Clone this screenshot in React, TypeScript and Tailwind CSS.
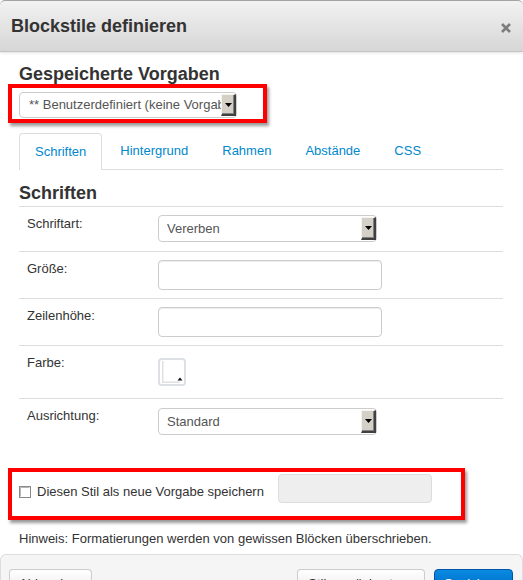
import React from "react";

const tabs = ["Schriften", "Hintergrund", "Rahmen", "Abstände", "CSS"];

function DropArrowButton() {
  return (
    <span className="my-px flex w-[15px] shrink-0 items-center justify-center border-t border-l border-r-2 border-b-2 border-t-[#f4f3ee] border-l-[#f4f3ee] border-r-[#404040] border-b-[#404040] bg-[#d4d0c8] shadow-[inset_-1px_-1px_0_#808080]">
      <svg width="7" height="4" viewBox="0 0 7 4" aria-hidden="true">
        <path d="M0 0h7L3.5 4z" fill="#000" />
      </svg>
    </span>
  );
}

function ClassicSelect({ value, className }: { value: string; className: string }) {
  return (
    <div className={`flex rounded-[4px] border border-[#ccc] bg-white text-[#555] ${className}`}>
      <span className="flex min-w-0 flex-1 items-center overflow-hidden whitespace-nowrap">{value}</span>
      <DropArrowButton />
    </div>
  );
}

function TextInput() {
  return (
    <input
      type="text"
      className="block h-[30px] w-[224px] rounded-[4px] border border-[#ccc] bg-white px-[6px] shadow-[inset_0_1px_1px_rgba(0,0,0,0.075)] outline-none"
    />
  );
}

function ColorSwatch() {
  return (
    <svg width="28" height="28" viewBox="0 0 28 28" aria-hidden="true">
      <rect x="1" y="1" width="26" height="26" rx="2.5" fill="#fff" stroke="#dde1e6" strokeWidth="2" />
      <rect x="4" y="3" width="1.5" height="22" fill="#e1e1e1" />
      <rect x="4" y="23.5" width="18" height="1.5" fill="#e1e1e1" />
      <path d="M19.5 22.5h5l-2.5-3z" fill="#111" />
    </svg>
  );
}

function CheckBox() {
  return (
    <svg width="12" height="12" viewBox="0 0 12 12" aria-hidden="true" className="shrink-0">
      <rect x="0.5" y="0.5" width="11" height="11" fill="#fff" stroke="#8a8a8a" />
      <path d="M1.5 10.5V1.5h9" fill="none" stroke="#b5b5b5" />
    </svg>
  );
}

function FormRow({
  label,
  height,
  controlTop,
  children,
}: {
  label: string;
  height: string;
  controlTop: string;
  children: React.ReactNode;
}) {
  return (
    <div className={`flex border-t border-[#ddd] ${height}`}>
      <div className="w-[139px] shrink-0 pl-[8px] pt-[7px] leading-[20px]">{label}</div>
      <div className={controlTop}>{children}</div>
    </div>
  );
}

export default function App() {
  return (
    <div className="relative h-[580px] w-[523px] overflow-hidden bg-white font-['Liberation_Sans',Arial,sans-serif] text-[13px] text-[#333]">
      {/* dialog title bar */}
      <header className="relative z-10 flex h-[52px] items-center justify-between rounded-t-[5px] border-t border-b border-t-[#a3a3a3] border-b-[#c4c4c4] bg-gradient-to-b from-[#f2f2f2] to-[#d6d6d6] pl-[11px] pr-[12px] shadow-[0_1px_3px_rgba(0,0,0,0.12)]">
        <h1 className="text-[18px] font-bold leading-[20px]">Blockstile definieren</h1>
        <svg width="10" height="10" viewBox="0 0 10 10" className="mt-[4px]" aria-hidden="true">
          <path d="M1 1l8 8M9 1L1 9" stroke="#7d7d7d" strokeWidth="2.6" />
        </svg>
      </header>

      <div className="pl-[19px] pr-[20px]">
        <h2 className="mt-[12px] text-[18px] font-bold leading-[20px]">Gespeicherte Vorgaben</h2>
        <ClassicSelect
          value="** Benutzerdefiniert (keine Vorgaben)"
          className="mt-[8px] h-[26px] w-[218px] pl-[9px]"
        />

        {/* tab strip */}
        <div className="mt-[15px] flex h-[37px] border-b border-[#ddd]">
          {tabs.map((t, i) => (
            <div
              key={t}
              className={
                i === 0
                  ? "-mb-px mr-[2px] flex h-[37px] items-center rounded-t-[4px] border border-b-0 border-[#ddd] bg-white px-[15px] text-[#0088cc]"
                  : "mr-[2px] flex h-[36px] items-center border border-transparent px-[15px] text-[#0088cc]"
              }
            >
              {t}
            </div>
          ))}
        </div>

        <h3 className="mt-[13px] mb-[3px] text-[18px] font-bold leading-[20px]">Schriften</h3>

        <div>
          <FormRow label="Schriftart:" height="h-[45px]" controlTop="pt-[8px]">
            <ClassicSelect value="Vererben" className="h-[27px] w-[219px] pl-[8px]" />
          </FormRow>
          <FormRow label="Größe:" height="h-[47px]" controlTop="pt-[8px]">
            <TextInput />
          </FormRow>
          <FormRow label="Zeilenhöhe:" height="h-[47px]" controlTop="pt-[8px]">
            <TextInput />
          </FormRow>
          <FormRow label="Farbe:" height="h-[53px]" controlTop="pt-[12px]">
            <ColorSwatch />
          </FormRow>
          <FormRow label="Ausrichtung:" height="h-[47px]" controlTop="pt-[9px]">
            <ClassicSelect value="Standard" className="h-[27px] w-[219px] pl-[8px]" />
          </FormRow>
        </div>

        {/* save as new preset */}
        <div className="mt-[29px] flex h-[29px] items-start">
          <label className="mt-[12px] flex items-center gap-[6px] leading-[13px]">
            <CheckBox />
            <span className="-mt-[2px]">Diesen Stil als neue Vorgabe speichern</span>
          </label>
          <input
            type="text"
            disabled
            className="ml-[14px] h-[29px] w-[154px] rounded-[4px] border border-[#ddd] bg-[#eee] outline-none"
          />
        </div>

        <p className="mt-[26px] leading-[20px]">Hinweis: Formatierungen werden von gewissen Blöcken überschrieben.</p>
      </div>

      {/* dialog footer */}
      <footer className="mt-[5px] flex h-[80px] items-start justify-between rounded-t-[6px] border-x border-t border-[#ddd] bg-[#f5f5f5] pl-[8px] pr-[9px] pt-[14px]">
        <button className="h-[30px] w-[83px] rounded-[4px] border border-[#ccc] border-b-[#b3b3b3] bg-gradient-to-b from-white to-[#e6e6e6] leading-[18px] text-[#333]">
          Abbrechen
        </button>
        <div className="flex gap-[9px]">
          <button className="h-[30px] w-[128px] rounded-[4px] border border-[#ccc] border-b-[#b3b3b3] bg-gradient-to-b from-white to-[#e6e6e6] leading-[18px] text-[#333]">
            Stile zurücksetzen
          </button>
          <button className="h-[30px] w-[79px] rounded-[4px] border border-[#0055aa] bg-gradient-to-b from-[#0a8ae0] to-[#0062c4] leading-[18px] text-white">
            Speichern
          </button>
        </div>
      </footer>

      {/* red highlight frames */}
      <div className="pointer-events-none absolute left-[8px] top-[84px] h-[39px] w-[259px] border-4 border-[#ff0000] shadow-[2px_3px_3px_rgba(0,0,0,0.4)]" />
      <div className="pointer-events-none absolute left-[8px] top-[468px] h-[52px] w-[457px] border-4 border-[#ff0000] shadow-[2px_3px_3px_rgba(0,0,0,0.4)]" />
    </div>
  );
}
